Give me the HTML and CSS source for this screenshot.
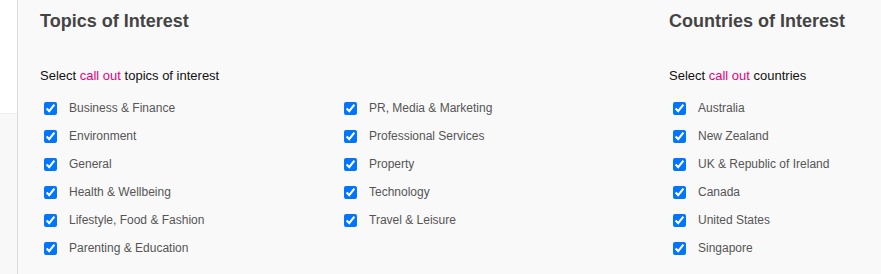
FILE: index.html
```html
<!DOCTYPE html>
<html lang="en">
<head>
  <meta charset="UTF-8">
  <meta name="viewport" content="width=device-width, initial-scale=1.0">
  <title>Interests</title>
  <link rel="stylesheet" href="styles.css">
</head>
<body>
  <div class="page">
    <div class="sidebar">
      <div class="sidebar-top"></div>
    </div>

    <div class="main">
      <!-- Topics -->
      <div class="section topics">
        <h2>Topics of Interest</h2>
        <p class="hint">Select <span class="accent">call out</span> topics of interest</p>
        <div class="options two-cols">
          <label class="option"><input type="checkbox" checked> Business &amp; Finance</label>
          <label class="option"><input type="checkbox" checked> Environment</label>
          <label class="option"><input type="checkbox" checked> General</label>
          <label class="option"><input type="checkbox" checked> Health &amp; Wellbeing</label>
          <label class="option"><input type="checkbox" checked> Lifestyle, Food &amp; Fashion</label>
          <label class="option"><input type="checkbox" checked> Parenting &amp; Education</label>
          <label class="option"><input type="checkbox" checked> PR, Media &amp; Marketing</label>
          <label class="option"><input type="checkbox" checked> Professional Services</label>
          <label class="option"><input type="checkbox" checked> Property</label>
          <label class="option"><input type="checkbox" checked> Technology</label>
          <label class="option"><input type="checkbox" checked> Travel &amp; Leisure</label>
        </div>
      </div>

      <!-- Countries -->
      <div class="section countries">
        <h2>Countries of Interest</h2>
        <p class="hint">Select <span class="accent">call out</span> countries</p>
        <div class="options">
          <label class="option"><input type="checkbox" checked> Australia</label>
          <label class="option"><input type="checkbox" checked> New Zealand</label>
          <label class="option"><input type="checkbox" checked> UK &amp; Republic of Ireland</label>
          <label class="option"><input type="checkbox" checked> Canada</label>
          <label class="option"><input type="checkbox" checked> United States</label>
          <label class="option"><input type="checkbox" checked> Singapore</label>
        </div>
      </div>
    </div>
  </div>
</body>
</html>
```

FILE: styles.css
```css
html, body {
  margin: 0;
  height: 100%;
}

body {
  font-family: "Liberation Sans", Arial, sans-serif;
  background-color: #f9f9f9;
}

.page {
  display: flex;
  min-height: 100%;
}

.sidebar {
  width: 17px;
  flex-shrink: 0;
  background-color: #f8f8f8;
  border-right: 1px solid #dcdcdc;
}

.sidebar-top {
  height: 113px;
  background-color: #fff;
  border-bottom: 1px solid #eef0f0;
}

.main {
  display: flex;
  padding-left: 22px;
}

.section h2 {
  margin: 11px 0 0;
  font-size: 18px;
  font-weight: bold;
  color: #444;
}

.hint {
  margin: 36px 0 0;
  font-size: 13px;
  color: #111;
}

.accent {
  color: #e6007e;
}

.topics {
  width: 629px;
}

.options {
  display: grid;
  grid-template-rows: repeat(6, 28px);
  margin-top: 11px;
}

.two-cols {
  grid-auto-flow: column;
  grid-template-columns: 300px 300px;
}

.option {
  display: flex;
  align-items: center;
  font-size: 12px;
  color: #555;
}

.option input {
  width: 13px;
  height: 13px;
  margin: 3px 12px 3px 4px;
}
```
